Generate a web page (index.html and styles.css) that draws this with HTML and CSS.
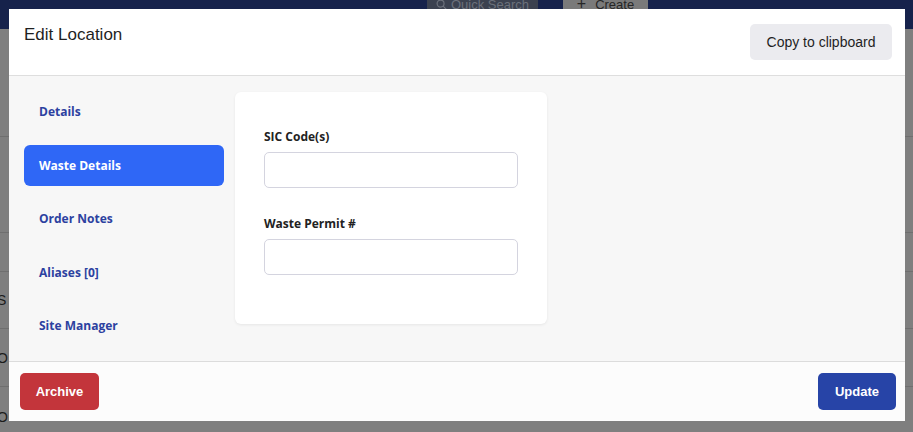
FILE: index.html
```html
<!DOCTYPE html>
<html>
<head>
<meta charset="utf-8">
<title>Edit Location</title>
<link rel="stylesheet" href="styles.css">
</head>
<body>
<div class="page">
  <div class="topbar">
    <div class="search">
      <svg class="search-icon" viewBox="0 0 12 12" width="11" height="11"><circle cx="5" cy="5" r="3.8" fill="none" stroke="currentColor" stroke-width="1.3"/><path d="M7.8 7.8 L11 11" stroke="currentColor" stroke-width="1.3" stroke-linecap="round"/></svg>
      <span>Quick Search</span>
    </div>
    <div class="create"><span class="plus">+</span><span>Create</span></div>
  </div>
  <div class="rows">
    <div class="row r1"></div>
    <div class="row r2"></div>
    <div class="row r3"></div>
    <div class="row r4"><span>S</span></div>
    <div class="row r5"><span>O</span></div>
    <div class="row r6"><span>O</span></div>
  </div>
</div>

<div class="modal">
  <div class="modal-header">
    <h1 class="modal-title">Edit Location</h1>
    <button class="btn btn-light">Copy to clipboard</button>
  </div>
  <div class="modal-body">
    <nav class="side-nav">
      <a class="nav-item">Details</a>
      <a class="nav-item active">Waste Details</a>
      <a class="nav-item">Order Notes</a>
      <a class="nav-item">Aliases [0]</a>
      <a class="nav-item">Site Manager</a>
    </nav>
    <div class="card">
      <div class="field">
        <label class="field-label">SIC Code(s)</label>
        <input class="field-input" type="text">
      </div>
      <div class="field">
        <label class="field-label">Waste Permit #</label>
        <input class="field-input" type="text">
      </div>
    </div>
  </div>
  <div class="modal-footer">
    <button class="btn btn-danger">Archive</button>
    <button class="btn btn-primary">Update</button>
  </div>
</div>
</body>
</html>
```

FILE: styles.css
```css
* { box-sizing: border-box; }
html, body { margin: 0; padding: 0; }
body {
  width: 913px;
  height: 432px;
  overflow: hidden;
  background: #7f7f7f;
  font-family: "Liberation Sans", Arial, sans-serif;
}

.page { width: 100%; height: 100%; }

.topbar {
  height: 29px;
  background: #16224b;
  display: flex;
  align-items: flex-start;
  padding-left: 427px;
  gap: 25px;
  overflow: hidden;
}
.search, .create {
  margin-top: -10px;
  height: 28px;
  display: flex;
  align-items: center;
  justify-content: center;
  gap: 4px;
  font-size: 13px;
}
.search {
  width: 111px;
  background: #3b414f;
  color: #6c717b;
}
.create {
  width: 85px;
  background: #7a7a7a;
  color: #262626;
  gap: 9px;
}
.plus { font-size: 16px; }

.rows { width: 100%; }
.row {
  border-bottom: 1px solid #6f6f6f;
  font-size: 14px;
  color: #1c1c1c;
  display: flex;
  align-items: center;
  margin-left: -3px;
}
.r1 { height: 108px; }
.r2 { height: 96px; }
.r3 { height: 39px; }
.r4 { height: 57px; }
.r5 { height: 58px; }
.r6 { height: 60px; }

/* modal overlay */
.modal {
  position: fixed;
  top: 9px;
  left: 9px;
  width: 896px;
  height: 412px;
  background: #ffffff;
  display: flex;
  flex-direction: column;
}

.modal-header {
  height: 67px;
  border-bottom: 1px solid #dedede;
  display: flex;
  justify-content: space-between;
  align-items: flex-start;
  padding: 0 13px 0 15px;
}
.modal-title {
  margin: 15px 0 0 0;
  font-size: 17px;
  line-height: 22px;
  font-weight: 400;
  color: #1f1f1f;
}

.btn {
  border: none;
  border-radius: 5px;
  font-family: "Liberation Sans", Arial, sans-serif;
  cursor: pointer;
}
.btn-light {
  margin-top: 15px;
  width: 142px;
  height: 36px;
  background: #ebebef;
  color: #1f1f1f;
  font-size: 14px;
}

.modal-body {
  flex: 1;
  background: #f7f7f7;
  display: flex;
  align-items: flex-start;
  padding: 15px 0 0 15px;
  gap: 11px;
}

.side-nav {
  width: 200px;
  display: flex;
  flex-direction: column;
  gap: 12.5px;
}
.nav-item {
  height: 41px;
  display: flex;
  align-items: center;
  padding-left: 15px;
  border-radius: 6px;
  font-family: "Open Sans", sans-serif;
  font-weight: 700;
  font-size: 12px;
  color: #2c41a0;
}
.nav-item.active {
  background: #2f67f6;
  color: #ffffff;
}

.card {
  margin-top: 1px;
  width: 312px;
  height: 232px;
  background: #ffffff;
  border-radius: 6px;
  box-shadow: 0 1px 3px rgba(0, 0, 0, 0.07);
  padding: 36px 29px 0 29px;
  display: flex;
  flex-direction: column;
  gap: 27px;
}
.field { display: flex; flex-direction: column; gap: 6px; }
.field-label {
  font-family: "Open Sans", sans-serif;
  font-weight: 700;
  font-size: 12px;
  line-height: 18px;
  color: #222222;
}
.field-input {
  width: 254px;
  height: 36px;
  border: 1px solid #d4d4df;
  border-radius: 5px;
  background: #ffffff;
  outline: none;
}

.modal-footer {
  height: 60px;
  border-top: 1px solid #dcdcdc;
  background: #fcfcfc;
  display: flex;
  justify-content: space-between;
  align-items: flex-start;
  padding: 11px 9px 0 11px;
}
.btn-danger, .btn-primary {
  height: 37px;
  color: #ffffff;
  font-weight: 700;
  font-size: 13px;
}
.btn-danger { width: 79px; background: #c3353b; }
.btn-primary { width: 78px; background: #2744a7; }
```
